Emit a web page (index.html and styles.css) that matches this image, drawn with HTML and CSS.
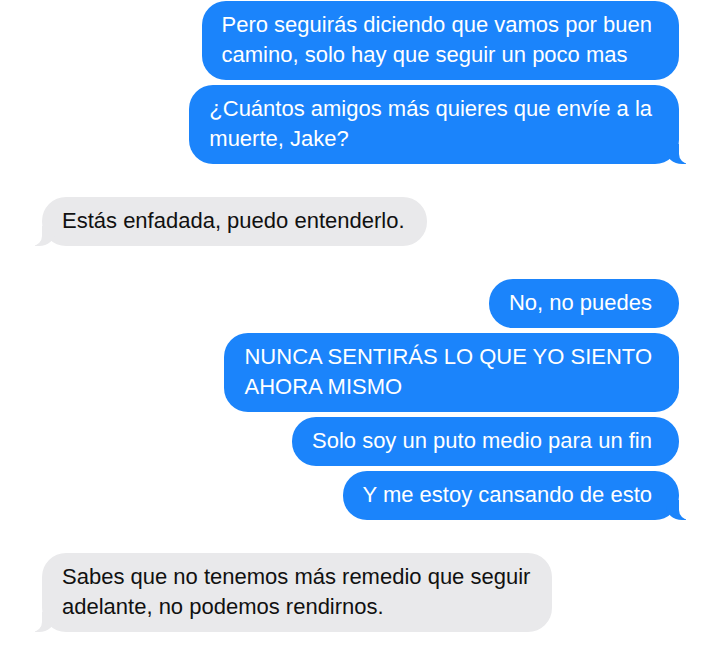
FILE: index.html
```html
<!DOCTYPE html>
<html lang="es">
<head>
    <meta charset="UTF-8">
    <meta name="viewport" content="width=device-width, initial-scale=1.0">
    <title>Mensajes</title>
    <link rel="stylesheet" href="styles.css">
</head>
<body>
    <div class="chat">
        <div class="group">
            <p class="bubble sent">Pero seguirás diciendo que vamos por buen<br>camino, solo hay que seguir un poco mas</p>
            <p class="bubble sent tail">¿Cuántos amigos más quieres que envíe a la<br>muerte, Jake?</p>
        </div>

        <div class="group">
            <p class="bubble received tail">Estás enfadada, puedo entenderlo.</p>
        </div>

        <div class="group">
            <p class="bubble sent">No, no puedes</p>
            <p class="bubble sent">NUNCA SENTIRÁS LO QUE YO SIENTO<br>AHORA MISMO</p>
            <p class="bubble sent">Solo soy un puto medio para un fin</p>
            <p class="bubble sent tail">Y me estoy cansando de esto</p>
        </div>

        <div class="group">
            <p class="bubble received tail">Sabes que no tenemos más remedio que seguir<br>adelante, no podemos rendirnos.</p>
        </div>
    </div>
</body>
</html>
```

FILE: styles.css
```css
body {
    margin: 0;
    background-color: #fff;
    font-family: "Liberation Sans", Arial, sans-serif;
}

.chat {
    display: flex;
    flex-direction: column;
    gap: 33px;
    padding: 1px 41px 0 42px;
}

.group {
    display: flex;
    flex-direction: column;
    gap: 5px;
}

.bubble {
    position: relative;
    margin: 0;
    padding: 9px 22px 10px 20px;
    border-radius: 24px;
    font-size: 22px;
    line-height: 30px;
    white-space: nowrap;
}

.sent {
    align-self: flex-end;
    padding-right: 27px;
    background-color: #1b84fb;
    color: #fff;
}

.received {
    align-self: flex-start;
    background-color: #e9e9eb;
    color: #111;
}

/* the little tail under the last bubble of a group */
.tail::before,
.tail::after {
    content: "";
    position: absolute;
    bottom: 0;
    height: 20px;
}

.sent.tail::before {
    right: -7px;
    width: 20px;
    background-color: #1b84fb;
    border-bottom-left-radius: 16px 14px;
}

.sent.tail::after {
    right: -26px;
    width: 26px;
    background-color: #fff;
    border-bottom-left-radius: 10px;
}

.received.tail::before {
    left: -7px;
    width: 20px;
    background-color: #e9e9eb;
    border-bottom-right-radius: 16px 14px;
}

.received.tail::after {
    left: -26px;
    width: 26px;
    background-color: #fff;
    border-bottom-right-radius: 10px;
}
```
